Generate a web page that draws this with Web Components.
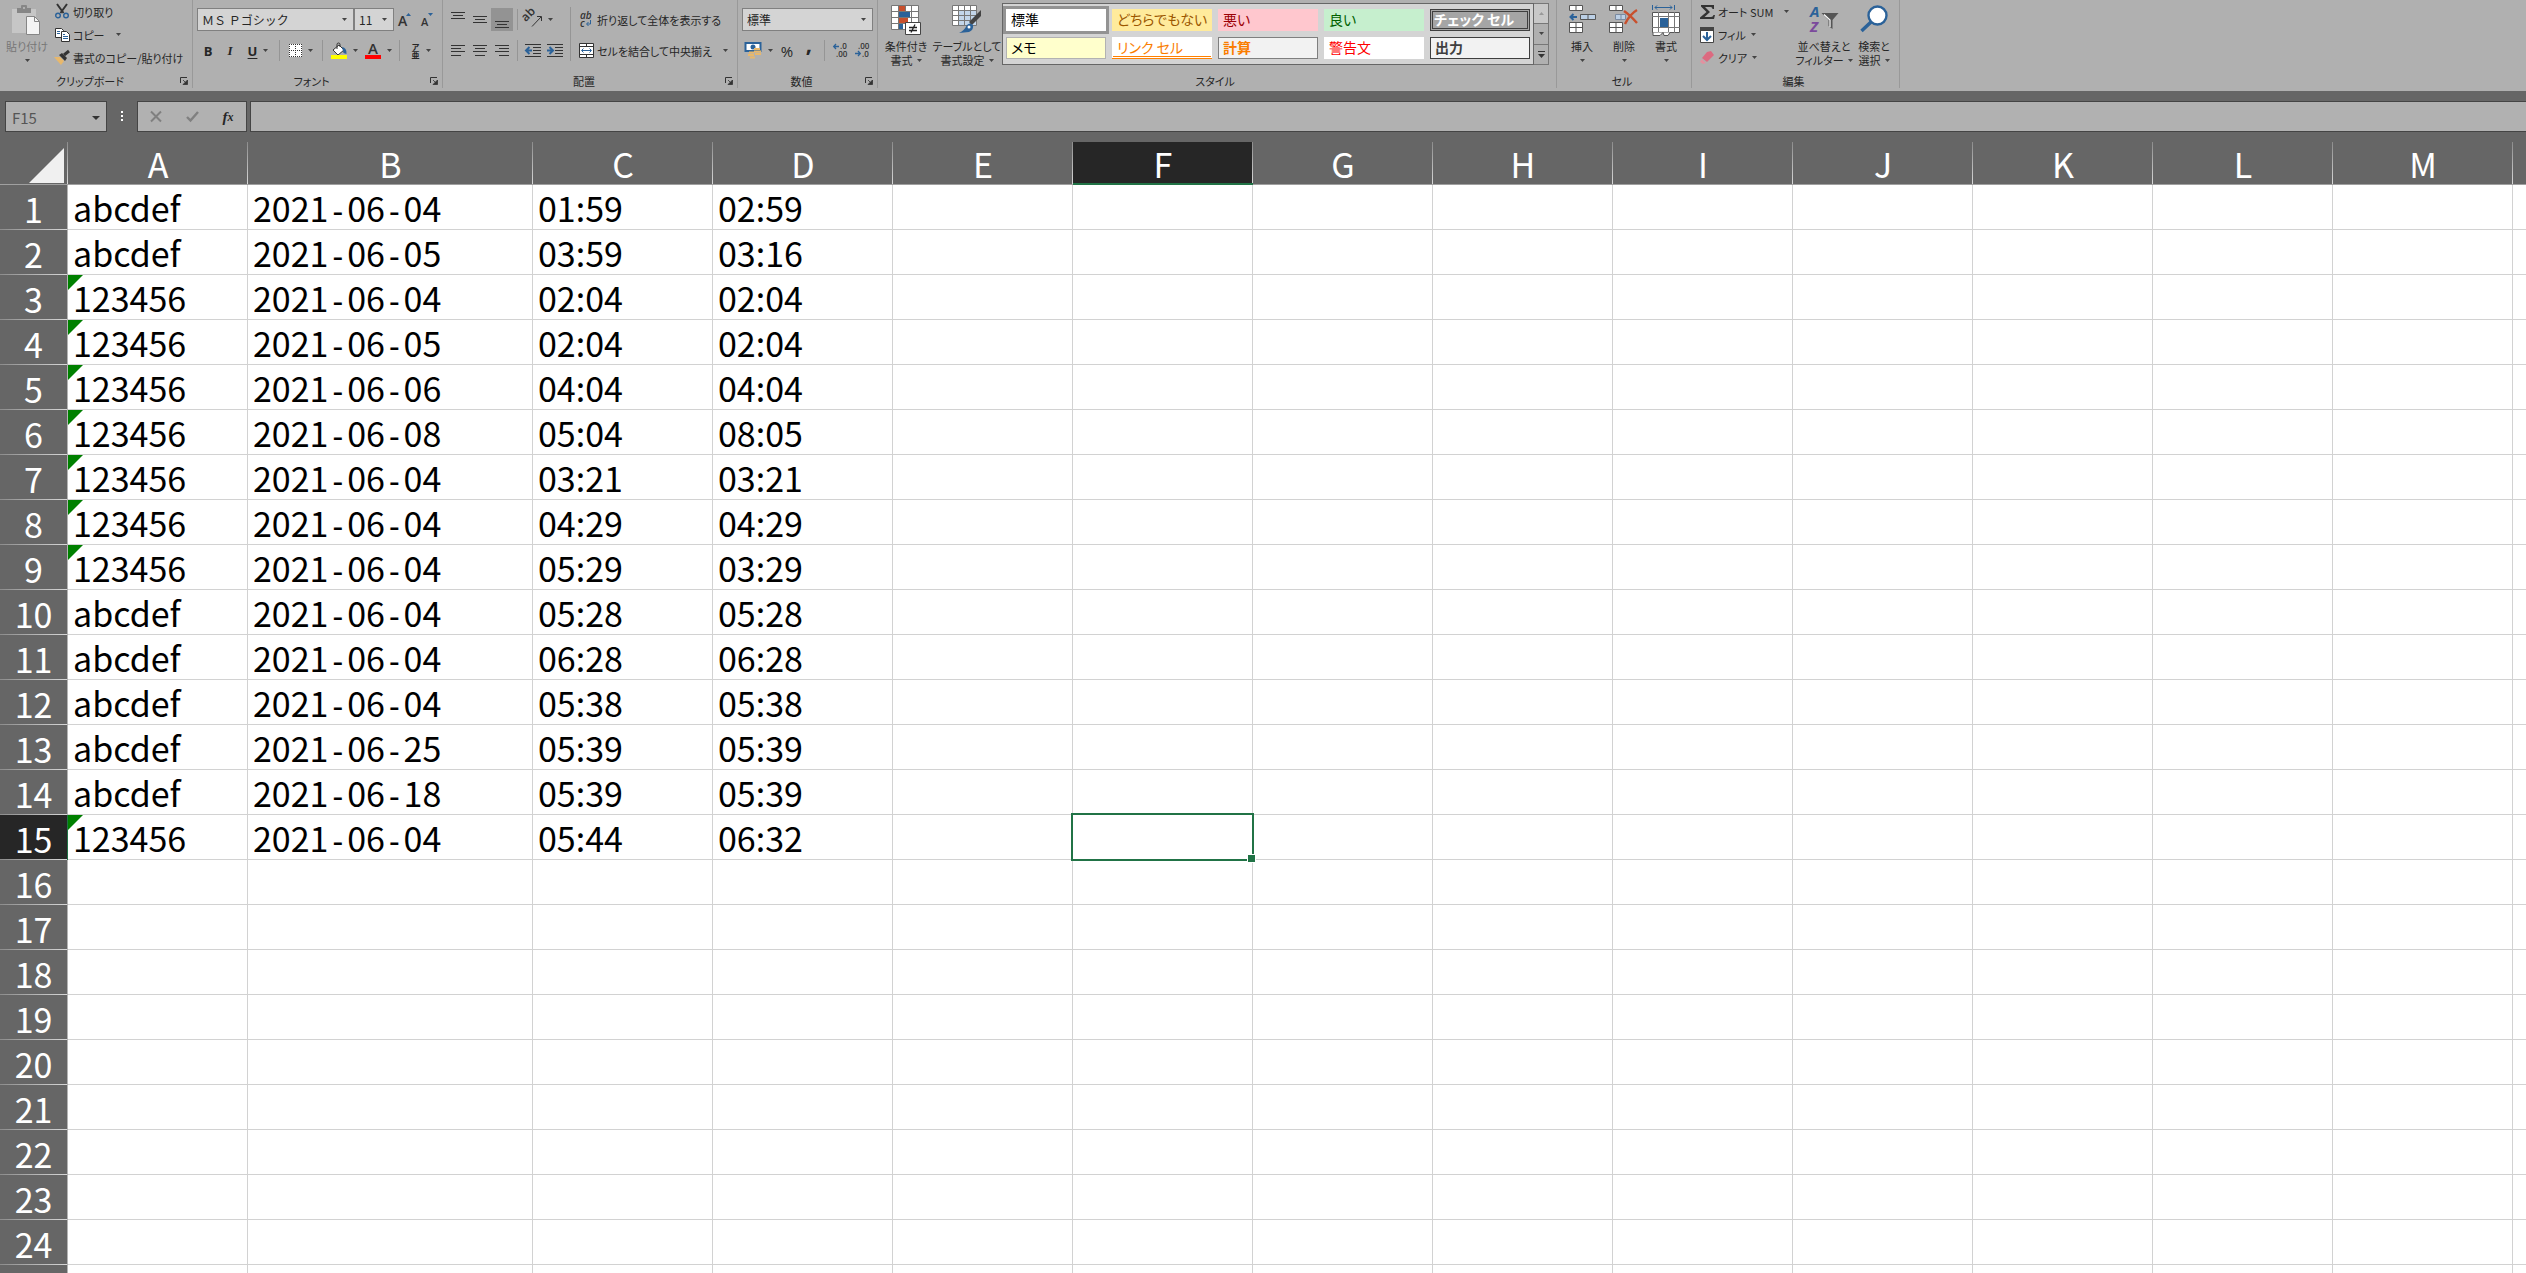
<!DOCTYPE html>
<html lang="ja">
<head>
<meta charset="utf-8">
<title>Spreadsheet</title>
<style>
html,body{height:100%}
body{margin:0;background:#666;color:#262626;font-family:"Noto Sans CJK JP","Noto Sans",sans-serif;font-size:11px;overflow:hidden}
</style>
</head>
<body>
<xl-app></xl-app>
<script>
const BASE = `*{box-sizing:border-box}
button,select,input{font:inherit;color:inherit;background:none;border:0;margin:0;padding:0;border-radius:0;outline:0}
button{cursor:default}svg{display:block;flex:none;overflow:visible}`;
const define = (name, css, html, after) => customElements.define(name, class extends HTMLElement {
  constructor(){
    super();
    this.attachShadow({mode:"open"});
  }
  connectedCallback(){
    if (this.shadowRoot.childNodes.length) return;
    const body = typeof html === "function" ? html(this) : html;
    this.shadowRoot.innerHTML = `<style>${BASE}${css}</style>${body}`;
    if (after) after(this);
  }
});

/* name: [width, height, markup] */
const ln = (x1,y,x2) => `<path d="M${x1} ${y}.5H${x2}" stroke="#333"/>`;
const lines = rows => rows.map(r => ln(...r)).join("");
const ICONS = {
  caret:[5,3,`<path d="M0 0h5L2.500 3z" fill="#444"/>`],
  caretBig:[8,4,`<path d="M0 0h8L4 4z" fill="#333"/>`],
  launcher:[8,8,`<path d="M.5 6V.5H7" fill="none" stroke="#333"/><path d="M7.500 3v4.500H3zM3 3l3 3" fill="#333" stroke="#333" stroke-width=".8"/>`],
  paste:[30,30,`<path d="M0 4h24v24H0z" fill="#c6c6c6"/><path d="M5 3h4V1q0-1 1-1h4q1 0 1 1v2h4v5H5z" fill="#868686"/><path d="M11 2h2v2h-2z" fill="#b0b0b0"/><path d="M14.500 11.500h8l5 5v13h-13z" fill="#f4f4f4" stroke="#868686"/><path d="M22.500 11.500v5h5" fill="none" stroke="#868686"/>`],
  cut:[14,15,`<path d="M2 0l6.500 9M12 0L5.500 9" stroke="#333" stroke-width="2"/><circle cx="3" cy="11.500" r="2.300" fill="none" stroke="#2b6299" stroke-width="1.400"/><circle cx="11" cy="11.500" r="2.300" fill="none" stroke="#2b6299" stroke-width="1.400"/>`],
  copy:[15,14,`<path d="M.5.5h6l2 2v7h-8z" fill="#fff" stroke="#333"/><path d="M6.500 3.500h5l3 3v7h-8z" fill="#fff" stroke="#333"/><path d="M2 3.500h3M2 5.500h3M8 6.500h2M8 8.500h5M8 10.500h5" stroke="#2b6299"/>`],
  brush:[16,15,`<path d="M0 7l6 0 4 4-3 4z" fill="#e8b86c"/><path d="M5 5l6 6 2-3-5-5z" fill="#333"/><path d="M10 5l5-4" stroke="#333" stroke-width="3"/>`],
  grow:[14,14,`<text x="0" y="13" font-family="Open Sans" font-weight="600" font-size="14" fill="#333">A</text><path d="M8 3h5L10.500 0z" fill="#2b6299"/>`],
  shrink:[13,14,`<text x="0" y="13" font-family="Open Sans" font-weight="600" font-size="11" fill="#333">A</text><path d="M7 0h5L9.500 3z" fill="#2b6299"/>`],
  borders:[13,13,`<path d="M0 0h13v13H0z" fill="#fff"/><path d="M0 .5h13M0 6.500h13M0 12.500h13M.5 0v13M6.500 0v13M12.500 0v13" stroke="#333" stroke-dasharray="1 1"/>`],
  fill:[16,16,`<path d="M2 7l6-5 5 5-6 5z" fill="#fff" stroke="#333"/><path d="M6 6V1.500q0-1.500 1.500-1.500T9 1.500V4" fill="none" stroke="#333"/><path d="M11 4q5 1 4.500 7l-3-1z" fill="#2b6299"/><path d="M0 12h16v4H0z" fill="#ff0"/>`],
  fontcolor:[16,16,`<text x="3" y="11" font-family="Open Sans" font-weight="600" font-size="15" fill="#333">A</text><path d="M0 12h16v4H0z" fill="red"/>`],
  alTop:[14,17,lines([[0,1,14],[2,4,12],[0,7,14]])],
  alMid:[14,17,lines([[0,5,14],[2,8,12],[0,11,14]])],
  alBot:[14,17,lines([[0,10,14],[2,13,12],[0,16,14]])],
  alL:[14,11,lines([[0,0,14],[0,3,10],[0,6,14],[0,10,10]])],
  alC:[14,11,lines([[0,0,14],[2,3,12],[0,6,14],[2,10,12]])],
  alR:[14,11,lines([[0,0,14],[4,3,14],[0,6,14],[4,10,14]])],
  outdent:[16,13,lines([[0,0,16],[8,3,16],[8,6,16],[8,9,16],[0,12,16]])+`<path d="M7 6.500H2M4.500 3L1 6.500 4.500 10" stroke="#2b6299" stroke-width="2" fill="none"/>`],
  indent:[16,13,lines([[0,0,16],[8,3,16],[8,6,16],[8,9,16],[0,12,16]])+`<path d="M0 6.500h5M2.500 3L6 6.500 2.500 10" stroke="#2b6299" stroke-width="2" fill="none"/>`],
  orient:[16,15,`<text x="-2" y="6" transform="rotate(-45 4 6)" font-family="Open Sans" font-weight="600" font-size="12" fill="#333">ab</text><path d="M6 14.500L15 5M11 4.500h4.500V9" stroke="#333" fill="none"/>`],
  wrap:[14,16,`<text x="1" y="7" font-family="Open Sans" font-weight="600" font-size="10" fill="#333">ab</text><text x="1" y="15" font-family="Open Sans" font-weight="600" font-size="10" fill="#333">c</text><path d="M11.500 8v4H8M9.500 10L7.500 12l2 2" stroke="#2b6299" fill="none"/>`],
  merge:[15,15,`<path d="M.5.5h14v14H.5z" fill="#fff" stroke="#333"/><path d="M0 3.500h15M0 11.500h15M7.500 0v3M7.500 12v3" stroke="#333"/><path d="M3 7.500h9M4.500 5.500L2.500 7.500l2 2M10.500 5.500l2 2-2 2" stroke="#2b6299" fill="none"/>`],
  money:[17,17,`<path d="M.5 1h15v8H.5z" fill="#fff" stroke="#2b6299" stroke-width="2"/><circle cx="8" cy="5" r="2.500" fill="#2b6299"/><path d="M9 7h6M9 9.500h7M4 10.500h5M10 12h6M3 13h6M5 15.500h5" stroke="#e8b86c" stroke-width="2"/>`],
  decInc:[15,15,`<text x="7" y="6" font-family="Open Sans" font-weight="600" font-size="8" fill="#333">.0</text><text x="3" y="14" font-family="Open Sans" font-weight="600" font-size="8" fill="#333">.00</text><path d="M6 3.500H1M3 1L.7 3.500 3 6" stroke="#2b6299" fill="none" stroke-width="1.300"/>`],
  decDec:[15,15,`<text x="3" y="6" font-family="Open Sans" font-weight="600" font-size="8" fill="#333">.00</text><text x="7" y="14" font-family="Open Sans" font-weight="600" font-size="8" fill="#333">.0</text><path d="M0 10.500h5M3 8l2.300 2.500L3 13" stroke="#2b6299" fill="none" stroke-width="1.300"/>`],
  cond:[30,30,`<path d="M.5.5h27v24H.5z" fill="#fff"/><path d="M.5.5h27v24H.5zM0 6.500h28M0 12.500h28M0 18.500h28M7.500 0v25M14.500 0v7M20.500 0v25" fill="none" stroke="#777"/><path d="M8 1h6v5H8zM8 13h9v5H8z" fill="#c8502d"/><path d="M8 7h11v5H8zM8 19h4v5H8z" fill="#2b6299"/><path d="M14.500 17.500h15v12h-15z" fill="#fff" stroke="#444"/><path d="M18 22.500h8M18 25.500h8M24 19.500l-4 8" stroke="#222" stroke-width="1.300"/>`],
  table:[30,28,`<path d="M.5.5h24v20H.5z" fill="#fff"/><path d="M7 6h17v14H7z" fill="#c3d6ea"/><path d="M.5.5h24v20H.5zM0 5.500h25M0 10.500h25M0 15.500h25M6.500 0v21M12.500 0v21M18.500 0v21" fill="none" stroke="#777"/><path d="M29 5v6l-9 9-3-3z" fill="#444"/><path d="M15 20q3-3 6 0 1 5-4 7l-10 1q5-2 8-8z" fill="#2b6299"/><circle cx="17" cy="22" r="1.500" fill="#fff"/>`],
  insert:[27,28,`<path d="M.5.500h13v5H.5zM7 .5v5M.5 17.500h13v10H.5zM7 17v10M.5 22.500h13" fill="#fff" stroke="#555"/><path d="M11.500 9.500h15v5h-15zM19 9.500v5" fill="#bcd0e6" stroke="#555"/><path d="M8 12H2M4.500 9L1.500 12l3 3" stroke="#2b6299" stroke-width="2" fill="none"/>`],
  del:[30,28,`<path d="M.5.500h13v5H.5zM7 .5v5M.5 17.500h13v10H.5zM7 17v10M.5 22.500h13" fill="#fff" stroke="#555"/><path d="M6.500 9.500h10v5h-10zM12 9.500v5" fill="#bcd0e6" stroke="#7a8aa0"/><path d="M15 6q6 4 13 12M28 5q-7 4-12 14" stroke="#c8502d" stroke-width="2.400" fill="none"/>`],
  format:[28,31,`<path d="M.5 0v5M22.500 0v5M3 2.500h17M5 .5l-2 2 2 2M18 .5l2 2-2 2" stroke="#2b6299" fill="none"/><path d="M.5 7.500h27v20H.5z" fill="#fff" stroke="#555"/><path d="M0 11.500h28M0 22.500h28M6.500 7v21M16.500 7v21M22.500 7v21" stroke="#777"/><path d="M8 13h8v9H8z" fill="#2b6299"/><path d="M1 27.500v3h7l3-3 1 3h4l2-3" fill="#fff" stroke="#555"/>`],
  sigma:[15,14,`<path d="M1 0h13v4h-1.500q0-2-2-2H5l5 5-5.500 5H11q2 0 2.500-2H15l-1 4H0v-1.500L6.500 7 1 1.500z" fill="#333"/>`],
  filldown:[14,16,`<path d="M.5.5h13v15H.5z" fill="#fff" stroke="#444"/><path d="M0 0h14v4H0z" fill="#444"/><path d="M7 5v8M3 9l4 4 4-4" stroke="#2b6299" stroke-width="2" fill="none"/>`],
  erase:[14,13,`<path d="M7 1l4-1 3 4-7 7-5-4z" fill="#dc6a80"/><path d="M1.500 8L6 12l-3 1-3-2z" fill="#e391a0"/>`],
  sort:[29,29,`<text x="0" y="12" font-family="Open Sans" font-weight="700" font-size="15" fill="#2b6299">A</text><text x="0" y="27" font-family="Open Sans" font-weight="700" font-size="15" fill="#7b4a9c">Z</text><path d="M11.500 8h17l-6 7v9l-4-3v-6z" fill="#555"/><path d="M14 9.500l6 5.500v7" stroke="#fff" fill="none" stroke-width="1.200"/>`],
  find:[28,28,`<circle cx="17.500" cy="10.500" r="9" fill="#fff" stroke="#2b6299" stroke-width="2.400"/><path d="M11 17L1.500 26" stroke="#2b6299" stroke-width="3.500"/>`],
  cancel:[12,11,`<path d="M1 .5l10 10M11 .5l-10 10" stroke="#808080" stroke-width="2"/>`],
  check:[13,11,`<path d="M1 6l3.500 3.500L12 1" fill="none" stroke="#808080" stroke-width="2.400"/>`],
  up:[5,3,`<path d="M0 3h5L2.500 0z" fill="#999"/>`],
  more:[7,7,`<path d="M0 .5h7" stroke="#333"/><path d="M0 3h7L3.500 7z" fill="#333"/>`],
  dots:[2,11,`<path d="M0 0h2v2H0zM0 4h2v2H0zM0 8h2v2H0z" fill="#fff"/>`]
};
const icon = n => { const [w,h,m] = ICONS[n]; return `<svg width="${w}" height="${h}" viewBox="0 0 ${w} ${h}" aria-hidden="true">${m}</svg>`; };

/* small icon-only tool, 22px wide unless it carries a drop-down caret */
define("xl-tool", `:host{display:flex;flex:none;width:22px;height:23px}
:host([wide]){width:34px}:host([on]){background:#939393}
button{flex:1;display:flex;align-items:center;justify-content:center;gap:6px;font:700 13px/20px "Open Sans",sans-serif}`,
 el => `<button aria-label="${el.getAttribute("label")||""}">${el.hasAttribute("icon")?icon(el.getAttribute("icon")):"<slot></slot>"}${el.hasAttribute("wide")?icon("caret"):""}</button>`);

/* horizontal tool: icon, text, optional caret */
define("xl-row-tool", `:host{display:flex;height:23px}
button{display:flex;align-items:center;gap:3px;white-space:nowrap;line-height:20px;font-feature-settings:"palt"}
i{width:16px;display:flex;justify-content:center}span{display:flex;padding-left:var(--caret-gap,5px)}`,
 el => `<button><i>${icon(el.getAttribute("icon"))}</i><slot></slot>${el.hasAttribute("caret")?`<span>${icon("caret")}</span>`:""}</button>`);

/* tall tool: icon above one or two lines of text */
define("xl-big-tool", `:host{display:flex;flex:none}
button{width:100%;display:flex;flex-direction:column;align-items:center;line-height:14px;white-space:nowrap;font-feature-settings:"palt"}
i{height:39px;padding-top:5px;display:flex;align-items:flex-start}
.second{height:14px;display:flex;align-items:center;gap:4px}
:host([muted]) button{color:#777}`,
 el => `<button><i>${icon(el.getAttribute("icon"))}</i><slot></slot><span class="second">${el.getAttribute("line2")||""}${icon("caret")}</span></button>`);

define("xl-sep", `:host{display:block;flex:none;width:1px;height:21px;margin:0 4px;background:#959595}:host([tall]){height:54px;margin:0}`, ``);

define("xl-group", `:host{display:flex;flex-direction:column;flex:none;height:88px;border-right:1px solid #999}
.body{display:flex;height:74px}
footer{display:flex;align-items:center;height:14px;padding-right:4px;font-feature-settings:"palt"}
span{flex:1;text-align:center;line-height:14px}`,
 el => `<div class="body"><slot></slot></div><footer><span>${el.getAttribute("label")}</span>${el.hasAttribute("launcher")?`<button aria-label="詳細">${icon("launcher")}</button>`:""}</footer>`);

define("xl-combo", `:host{display:flex;flex:none;height:23px;border:1px solid #808080;background:#d4d4d4;position:relative}
select{appearance:none;flex:1;padding:0 4px;min-width:0;font-size:12px;line-height:20px}
i{position:absolute;right:6px;top:9px;pointer-events:none}`,
 el => `<select aria-label="${el.getAttribute("label")}"><option>${el.getAttribute("value")}</option></select><i>${icon("caret")}</i>`);

define("xl-style", `:host{display:block;width:100px;height:22px;font:14px/18px "Noto Sans CJK JP",sans-serif}
button{width:100%;height:100%;padding:0 4px 2px;text-align:left;background:var(--bg,#fff);color:var(--fg,#000);border:1px solid var(--edge,transparent);background-clip:border-box;white-space:nowrap;font-feature-settings:"palt";line-height:18px}
:host([selected]){outline:3px solid #939393}
:host([strong]) button{font-weight:700}
:host([linked]) button{border-bottom:3px double #ff8000}
:host([double]) button{border:3px double #3f3f3f;padding:0 1px 2px;line-height:14px}`,
 `<button><slot></slot></button>`);

define("xl-gallery", `:host{display:flex;height:62px;margin:3px 0 0 2px}
.cells{display:grid;grid-template-columns:repeat(5,100px);gap:6px;padding:5px 3px;border:1px solid #666;background:#d4d4d4}
.scroll{display:flex;flex-direction:column;width:15px;border:1px solid #777;border-left:0}
.scroll button{flex:1;display:flex;align-items:center;justify-content:center;background:#b0b0b0}
.scroll button:first-child{background:#c8c8c8}
.scroll button+button{border-top:1px solid #777}`,
`<div class="cells">
<xl-style selected>標準</xl-style>
<xl-style style="--bg:#ffeb9c;--fg:#9c5700">どちらでもない</xl-style>
<xl-style style="--bg:#ffc7ce;--fg:#9c0006">悪い</xl-style>
<xl-style style="--bg:#c6efce;--fg:#006100">良い</xl-style>
<xl-style strong double style="--bg:#a5a5a5;--fg:#fff">チェック セル</xl-style>
<xl-style style="--bg:#ffc;--edge:#b2b2b2">メモ</xl-style>
<xl-style linked style="--fg:#fa7d00">リンク セル</xl-style>
<xl-style strong style="--bg:#f2f2f2;--fg:#fa7d00;--edge:#7f7f7f">計算</xl-style>
<xl-style style="--fg:#f00">警告文</xl-style>
<xl-style strong style="--bg:#f2f2f2;--fg:#3f3f3f;--edge:#3f3f3f">出力</xl-style>
</div><div class="scroll"><button aria-label="上">${icon("up")}</button><button aria-label="下">${icon("caret")}</button><button aria-label="その他">${icon("more")}</button></div>`);

define("xl-ribbon", `:host{display:flex;height:91px;background:#b0b0b0}
.stack{display:flex;flex-direction:column}
.rows{display:flex;flex-direction:column;gap:8px;padding:8px 0 0 4px}
.line{display:flex;align-items:center;height:23px}
.clip{width:193px}.font{width:250px}.align{width:295px}.num{width:140px}.styles{width:679px}.cells{width:135px}.edit{width:208px}
.ruby{display:flex;flex-direction:column;align-items:center;font:700 8px/8px "Noto Sans CJK JP",sans-serif}
em{font:italic 700 13px/20px "Liberation Serif",serif}u{text-underline-offset:2px}
.pct{font:15px/20px "Open Sans",sans-serif}.comma{font:700 22px/10px "Open Sans",sans-serif;padding-bottom:16px}`,
`<xl-group class="clip" label="クリップボード" launcher>
 <xl-big-tool muted icon="paste" style="width:54px">貼り付け</xl-big-tool>
 <div class="stack"><xl-row-tool icon="cut">切り取り</xl-row-tool><xl-row-tool icon="copy" caret style="--caret-gap:8px">コピー</xl-row-tool><xl-row-tool icon="brush">書式のコピー/貼り付け</xl-row-tool></div>
</xl-group>
<xl-group class="font" label="フォント" launcher>
 <div class="rows">
  <div class="line"><xl-combo style="width:157px" label="フォント" value="ＭＳ Ｐゴシック"></xl-combo><xl-combo style="width:40px" label="サイズ" value="11"></xl-combo><xl-tool icon="grow" label="拡大"></xl-tool><xl-tool icon="shrink" label="縮小"></xl-tool></div>
  <div class="line"><xl-tool>B</xl-tool><xl-tool><em>I</em></xl-tool><xl-tool wide><u>U</u></xl-tool><xl-sep></xl-sep><xl-tool wide icon="borders" label="罫線"></xl-tool><xl-sep></xl-sep><xl-tool wide icon="fill" label="塗りつぶし"></xl-tool><xl-tool wide icon="fontcolor" label="文字色"></xl-tool><xl-sep></xl-sep><xl-tool wide><span class="ruby"><span>ア</span><span>亜</span></span></xl-tool></div>
 </div>
</xl-group>
<xl-group class="align" label="配置" launcher>
 <div class="rows">
  <div class="line"><xl-tool icon="alTop" label="上揃え"></xl-tool><xl-tool icon="alMid" label="上下中央"></xl-tool><xl-tool icon="alBot" on label="下揃え"></xl-tool><xl-sep></xl-sep><xl-tool wide icon="orient" label="方向"></xl-tool></div>
  <div class="line"><xl-tool icon="alL" label="左揃え"></xl-tool><xl-tool icon="alC" label="中央揃え"></xl-tool><xl-tool icon="alR" label="右揃え"></xl-tool><xl-sep></xl-sep><xl-tool icon="outdent" label="インデント減"></xl-tool><xl-tool icon="indent" label="インデント増"></xl-tool></div>
 </div>
 <div style="padding:7px 3px 0 4px"><xl-sep tall></xl-sep></div>
 <div class="rows"><xl-row-tool icon="wrap">折り返して全体を表示する</xl-row-tool><xl-row-tool icon="merge" caret style="--caret-gap:8px">セルを結合して中央揃え</xl-row-tool></div>
</xl-group>
<xl-group class="num" label="数値" launcher>
 <div class="rows">
  <xl-combo style="width:131px" label="表示形式" value="標準"></xl-combo>
  <div class="line"><xl-tool wide icon="money" label="通貨"></xl-tool><xl-tool><span class="pct">%</span></xl-tool><xl-tool><span class="comma">,</span></xl-tool><xl-sep></xl-sep><xl-tool icon="decInc" label="小数点以下を増やす"></xl-tool><xl-tool icon="decDec" label="小数点以下を減らす"></xl-tool></div>
 </div>
</xl-group>
<xl-group class="styles" label="スタイル">
 <xl-big-tool icon="cond" line2="書式" style="width:56px">条件付き</xl-big-tool>
 <xl-big-tool icon="table" line2="書式設定" style="width:66px">テーブルとして</xl-big-tool>
 <xl-gallery></xl-gallery>
</xl-group>
<xl-group class="cells" label="セル">
 <div style="display:flex;padding-left:4px"><xl-big-tool icon="insert" style="width:42px">挿入</xl-big-tool><xl-big-tool icon="del" style="width:42px">削除</xl-big-tool><xl-big-tool icon="format" style="width:42px">書式</xl-big-tool></div>
</xl-group>
<xl-group class="edit" label="編集">
 <div class="stack" style="width:100px;padding-left:7px"><xl-row-tool icon="sigma" caret style="--caret-gap:8px">オート SUM</xl-row-tool><xl-row-tool icon="filldown" caret style="--caret-gap:2px">フィル</xl-row-tool><xl-row-tool icon="erase" caret style="--caret-gap:2px">クリア</xl-row-tool></div>
 <xl-big-tool icon="sort" line2="フィルター" style="width:64px">並べ替えと</xl-big-tool>
 <xl-big-tool icon="find" line2="選択" style="width:36px">検索と</xl-big-tool>
</xl-group>`);

define("xl-formula-bar", `:host{display:flex;align-items:stretch;height:31px;margin:10px 0}
.box{display:flex;align-items:center;border:1px solid #444;background:#b1b1b1}
.name{width:102px;margin-left:5px;padding:2px 6px 0}
.name input{flex:1;min-width:0;font:15px/24px "Noto Sans CJK JP",sans-serif;color:#555}
.dots{width:30px;display:flex;align-items:center;justify-content:center}
.fx{width:110px;margin-right:3px}
.fx button{flex:1;display:flex;justify-content:center;font:italic 700 15px/20px "Liberation Serif",serif}
.fx small{font-size:12px}
.formula{flex:1;border-right:0}.formula input{flex:1;padding:0 6px}`,
`<div class="box name"><input aria-label="名前ボックス" value="F15"><button aria-label="名前一覧">${icon("caretBig")}</button></div>
<div class="dots">${icon("dots")}</div>
<div class="box fx"><button aria-label="キャンセル">${icon("cancel")}</button><button aria-label="入力">${icon("check")}</button><button aria-label="関数の挿入">f<small>x</small></button></div>
<div class="box formula"><input aria-label="数式バー"></div>`);

const A="abcdef", N="123456";
const DATA = [[A,"04","01:59","02:59"],[A,"05","03:59","03:16"],[N,"04","02:04","02:04"],[N,"05","02:04","02:04"],[N,"06","04:04","04:04"],[N,"08","05:04","08:05"],[N,"04","03:21","03:21"],[N,"04","04:29","04:29"],[N,"04","05:29","03:29"],[A,"04","05:28","05:28"],[A,"04","06:28","06:28"],[A,"04","05:38","05:38"],[A,"25","05:39","05:39"],[A,"18","05:39","05:39"],[N,"04","05:44","06:32"]];
define("xl-sheet", `:host{display:block;flex:1;min-height:0;font-size:34px}
table{width:100%;table-layout:fixed;border-collapse:separate;border-spacing:0;color:#000}
th,td{padding:2px 0 0;height:45px;line-height:42px;font-weight:400;white-space:nowrap}
td{background:#fff;border-right:1px solid #d2d2d2;border-bottom:1px solid #d2d2d2;padding-left:5px;position:relative}
td:last-child{border-right:0}
th{color:#fff;background:#666}
thead th{height:43px;line-height:40px;border-bottom:1px solid #a0a0a0;background:linear-gradient(#8c8c8c,#d8d8d8) right/1px 100% no-repeat #666}
thead th:last-child{background:#666}
tbody th{border-right:1px solid #b4b4b4;background:linear-gradient(90deg,#8c8c8c,#d8d8d8) bottom/100% 1px no-repeat #666}
thead th.on{background-color:#262626;border-bottom:2px solid #217346;line-height:39px}
tbody th.on{background-color:#262626;border-right-color:#217346}
.corner svg{margin:2px 0 0 29px}
.text::before{content:"";position:absolute;left:0;top:0;width:15px;height:15px;background:#008000;clip-path:polygon(0 0,100% 0,0 100%)}
.dash{font-family:"DejaVu Sans Mono",monospace;font-size:31px;line-height:20px}
.active::before{content:"";position:absolute;inset:-2px;border:2px solid #217346;z-index:1}
.active::after{content:"";position:absolute;right:-4px;bottom:-4px;width:7px;height:7px;border:1px solid #fff;background:#217346;z-index:2}`,
 () => {
  const cols = [..."ABCDEFGHIJKLM",""];
  const date = d => `2021<span class="dash">-</span>06<span class="dash">-</span>${d}`;
  let h = `<table><colgroup><col style="width:68px"><col style="width:180px"><col style="width:285px">${'<col style="width:180px">'.repeat(11)}<col></colgroup><thead><tr><th class="corner"><svg width="35" height="35" aria-hidden="true"><path d="M35 0v35H0z" fill="#f0f0f0"/></svg></th>`;
  h += cols.map(c => `<th scope="col"${c==="F"?' class="on"':""}>${c}</th>`).join("") + "</tr></thead><tbody>";
  for (let r = 1; r <= 25; r++) {
    const d = DATA[r-1];
    h += `<tr><th scope="row"${r===15?' class="on"':""}>${r<25?r:""}</th>` + cols.map((c,i) => {
      const v = d && i < 4 ? (i===1 ? date(d[1]) : d[i]) : "";
      const k = v === N ? "text" : (r===15 && c==="F" ? "active" : "");
      return `<td${k?` class="${k}"`:""}>${v}</td>`;
    }).join("") + "</tr>";
  }
  return h + "</tbody></table>";
 });

define("xl-app", `:host{display:flex;flex-direction:column;height:100vh;background:#666;overflow:hidden}xl-ribbon,xl-formula-bar{flex:none}`,
 `<xl-ribbon></xl-ribbon><xl-formula-bar></xl-formula-bar><xl-sheet></xl-sheet>`);
</script>
</body>
</html>
